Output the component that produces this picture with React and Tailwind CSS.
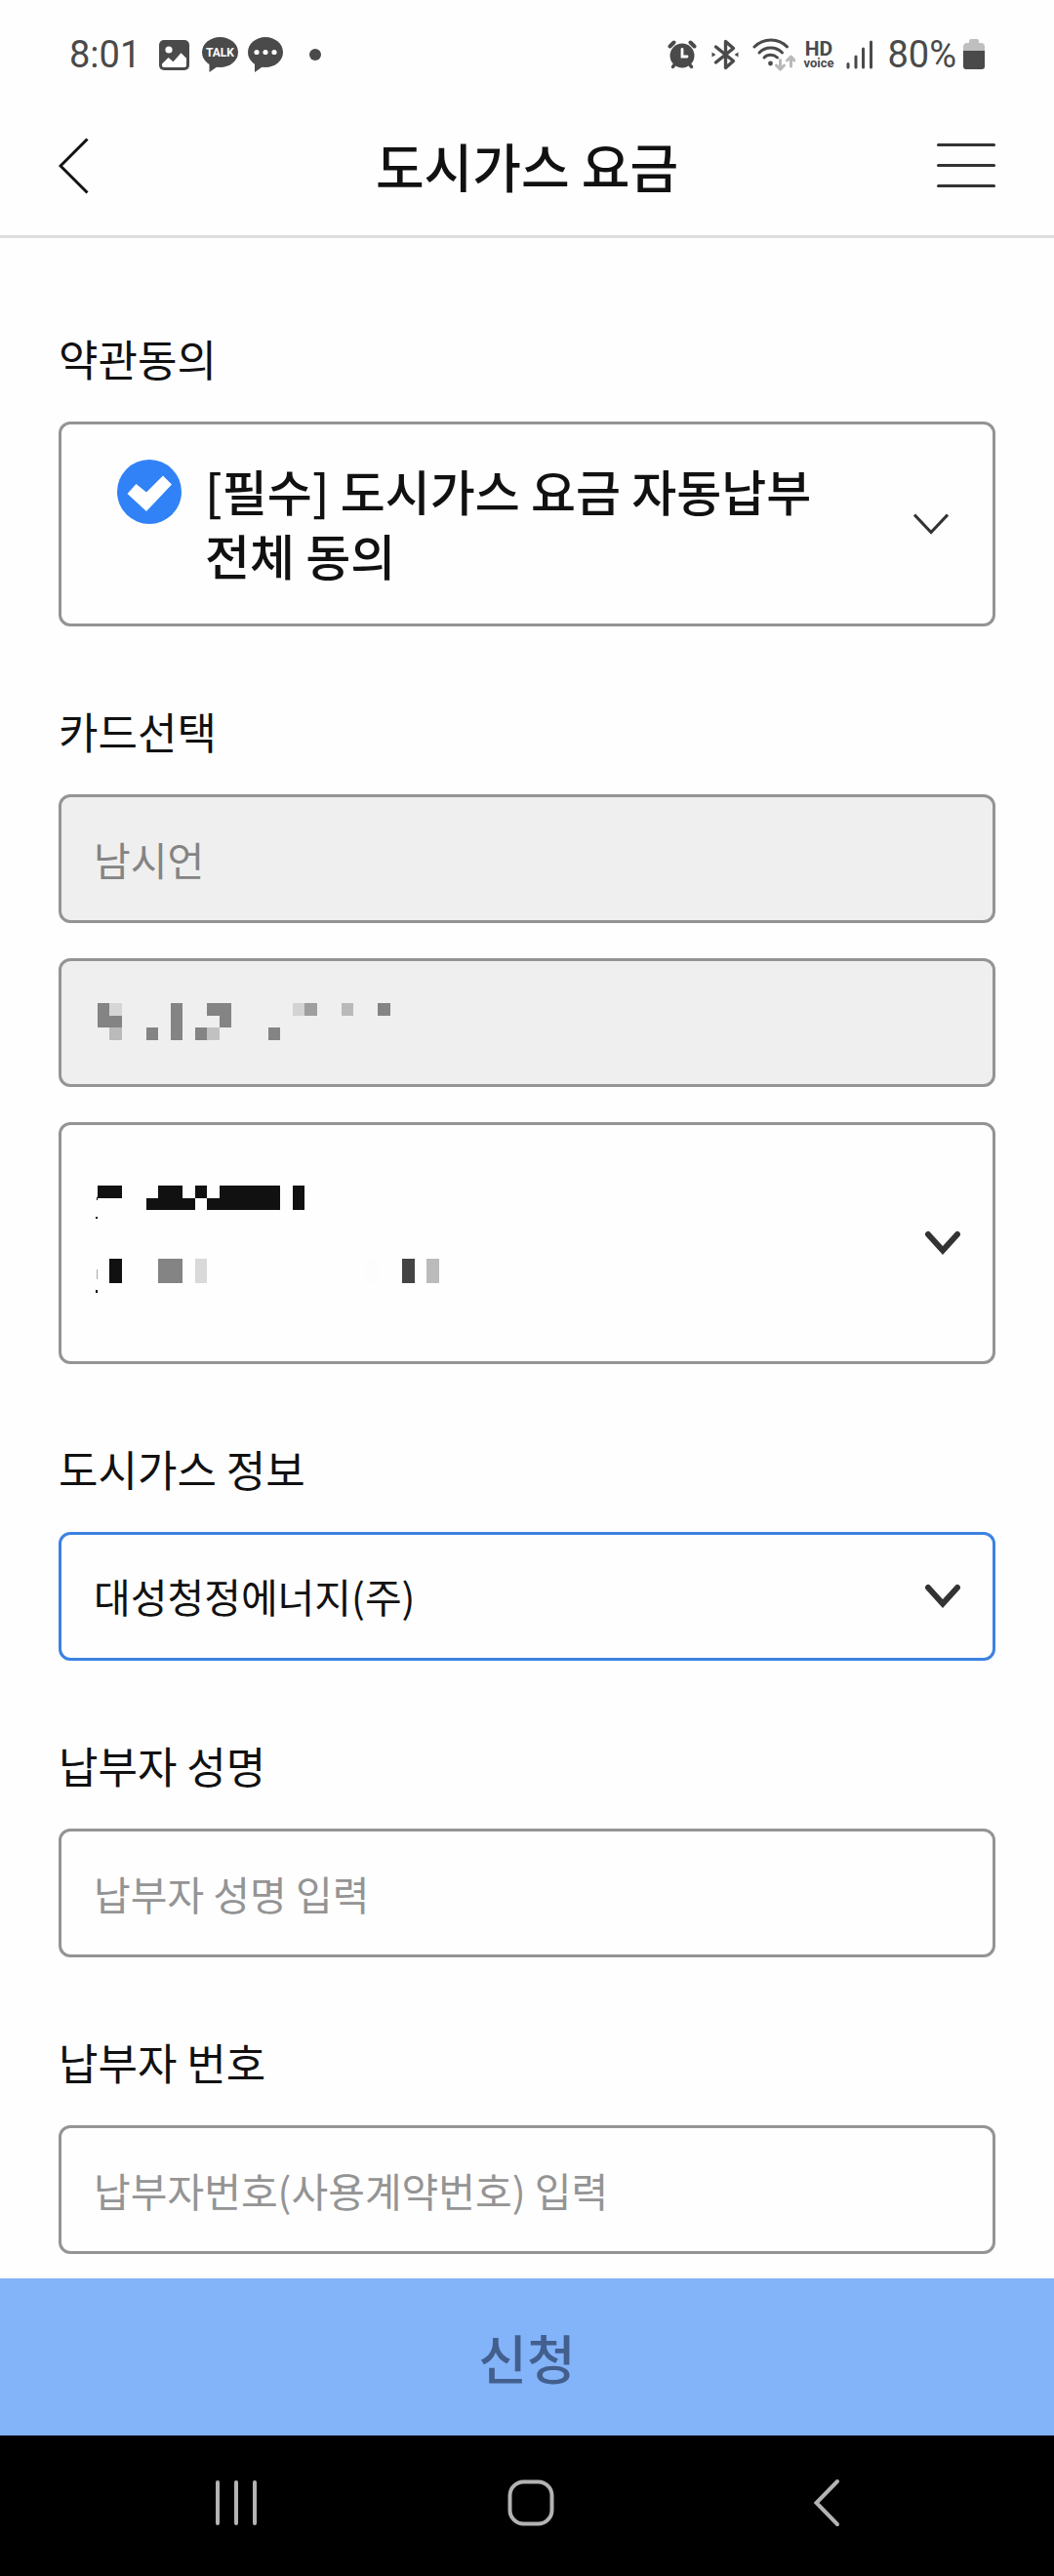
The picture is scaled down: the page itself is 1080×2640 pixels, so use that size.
import React, { useState } from 'react'

const CELL = 12.5

// [column, row, columns, rows, colour]
const accountMask = [
  [0, 0, 1, 1, '#848484'],
  [1, 0, 1, 1, '#d6d6d6'],
  [0, 1, 2, 1, '#848484'],
  [1, 2, 1, 1, '#bababa'],
  [4, 2, 1, 1, '#848484'],
  [6, 0, 1, 3, '#848484'],
  [8, 2, 1, 1, '#848484'],
  [9, 2, 1, 1, '#c1c1c1'],
  [9, 0, 2, 1, '#848484'],
  [10, 1, 1, 1, '#848484'],
  [14, 2, 1, 1, '#848484'],
  [16, 0, 1, 1, '#d3d3d3'],
  [17, 0, 1, 1, '#9f9f9f'],
  [20, 0, 1, 1, '#b9b9b9'],
  [23, 0, 1, 1, '#848484'],
]

const cardMask = [
  [0, 0, 2, 1, '#111111'],
  [5, 0, 2, 1, '#111111'],
  [8, 0, 1, 1, '#111111'],
  [10, 0, 5, 1, '#111111'],
  [4, 1, 4, 1, '#111111'],
  [9, 1, 6, 1, '#111111'],
  [16, 0, 1, 2, '#111111'],
  [1, 6, 1, 2, '#111111'],
  [5, 6, 2, 2, '#848484'],
  [8, 6, 1, 2, '#d9d9d9'],
  [22, 6, 1, 2, '#fdfdfd'],
  [25, 6, 1, 2, '#444444'],
  [27, 6, 1, 2, '#bbbbbb'],
]

const Mosaic = ({ cells, height, className, children }) => (
  <svg
    width="360"
    height={height}
    viewBox={`-4 0 360 ${height}`}
    className={className}
    shapeRendering="crispEdges"
    aria-hidden="true"
  >
    {cells.map(([col, row, cols, rows, fill]) => {
      const x = Math.floor(col * CELL)
      const y = Math.round(row * CELL)
      return (
        <rect
          key={`${col}-${row}`}
          x={x}
          y={y}
          width={Math.floor((col + cols) * CELL) - x}
          height={Math.round((row + rows) * CELL) - y}
          fill={fill}
        />
      )
    })}
    {children}
  </svg>
)

const StatusBar = () => (
  <div className="flex h-[98px] items-center justify-between pt-[14px] pr-[71px] pl-[71px] font-['Roboto',sans-serif] text-[38px] leading-none text-[#4a4a4a]">
    <div className="flex items-center">
      <span>8:01</span>
      <svg width="31" height="31" viewBox="0 0 31 31" className="ml-[19px]" aria-hidden="true">
        <rect width="31" height="31" rx="5" fill="#4a4a4a" />
        <circle cx="10" cy="10" r="3.6" fill="#fff" />
        <path d="M3 24.5 9.5 18l5 4.200 8-9 5.500 5.500V26a2 2 0 0 1-2 2H5a2 2 0 0 1-2-2Z" fill="#fff" />
      </svg>
      <svg width="37" height="36" viewBox="0 0 37 36" className="ml-[13px]" aria-hidden="true">
        <ellipse cx="18.5" cy="15.500" rx="18.500" ry="15.500" fill="#4a4a4a" />
        <path d="M7.500 25v11l10-7Z" fill="#4a4a4a" />
        <text x="18.5" y="20" textAnchor="middle" fontSize="12" fontWeight="700" fill="#fff">
          TALK
        </text>
      </svg>
      <svg width="36" height="36" viewBox="0 0 36 36" className="ml-[10px]" aria-hidden="true">
        <ellipse cx="18" cy="15.500" rx="18" ry="15.500" fill="#4a4a4a" />
        <path d="M7 25v11l10-7Z" fill="#4a4a4a" />
        <circle cx="9" cy="15.500" r="2.600" fill="#fff" />
        <circle cx="18" cy="15.500" r="2.600" fill="#fff" />
        <circle cx="27" cy="15.500" r="2.600" fill="#fff" />
      </svg>
      <span className="ml-[27px] h-3 w-3 rounded-full bg-[#4a4a4a]" />
    </div>

    <div className="flex items-center">
      <svg width="30" height="30" viewBox="0 0 30 30" fill="none" stroke="#4a4a4a" strokeLinecap="round" aria-hidden="true">
        <circle cx="15" cy="16" r="12.500" fill="#4a4a4a" stroke="none" />
        <path d="m2.500 6.500 4-4M27.500 6.500l-4-4" strokeWidth="4" />
        <path d="m5.500 27.500 3-4M24.500 27.500l-3-4" strokeWidth="3.500" />
        <path d="M15 9.500v7.500h5" stroke="#fff" strokeWidth="2.800" />
      </svg>
      <svg width="28" height="32" viewBox="0 0 28 32" className="ml-[15px]" fill="none" stroke="#4a4a4a" strokeWidth="3.400" strokeLinejoin="round" strokeLinecap="round" aria-hidden="true">
        <path d="M4.500 8 22.500 22.500 14.500 29.500V2.500L22.500 9.500 4.500 24" />
        <path d="M.5 13.500v5l4-2.500ZM27.500 13.500v5l-4-2.500Z" fill="#4a4a4a" stroke="none" />
      </svg>
      <svg width="44" height="34" viewBox="0 0 44 34" className="ml-[14px]" fill="none" strokeLinecap="round" aria-hidden="true">
        <g stroke="#4a4a4a" strokeWidth="3">
          <path d="M2 9C11-.5 27-.5 35.500 9" />
          <path d="M7 15C13.500 8.300 24 8.300 30.500 15" />
          <path d="M12 20C15.500 16.300 21.500 16.300 25.500 20" />
        </g>
        <circle cx="18.500" cy="26" r="2.400" fill="#4a4a4a" />
        <g stroke="#b9b9b9" strokeWidth="3" strokeLinejoin="round">
          <path d="M28.500 22.500v9.500M24.500 28l4 4.200 4-4.200" />
          <path d="M39.500 29v-9.500M35.500 23l4-4 3.500 4" />
        </g>
      </svg>
      <span className="ml-2 flex flex-col items-center font-bold">
        <span className="text-[21px] leading-[18px]">HD</span>
        <span className="text-[13px] leading-[12px]">voice</span>
      </span>
      <svg width="28" height="30" viewBox="0 0 28 30" className="ml-[13px]" stroke="#4a4a4a" strokeWidth="3" strokeLinecap="round" aria-hidden="true">
        <path d="M2 24.500v3.500M10 17v11M17.500 9v19M25.500 2v26" />
      </svg>
      <span className="ml-[14px]">80%</span>
      <svg width="22" height="32" viewBox="0 0 22 32" className="ml-[7px]" aria-hidden="true">
        <path d="M6 4V2a2 2 0 0 1 2-2h6a2 2 0 0 1 2 2v2h2a4 4 0 0 1 4 4v4H0V8a4 4 0 0 1 4-4Z" fill="#bfbfbf" />
        <path d="M0 12h22v16a3 3 0 0 1-3 3H3a3 3 0 0 1-3-3Z" fill="#4a4a4a" />
      </svg>
    </div>
  </div>
)

const Header = () => (
  <header className="flex h-[146px] items-center justify-between border-b-[3px] border-[#dddddd] px-[60px]">
    <button type="button" aria-label="뒤로" className="flex w-[60px]">
      <svg width="32" height="58" viewBox="0 0 32 58" fill="none" stroke="#111" strokeWidth="3">
        <path d="M29.500 1.500 2 29l27.500 27.500" />
      </svg>
    </button>
    <h1 className="text-[54px] leading-[66px] font-medium">도시가스 요금</h1>
    <button type="button" aria-label="메뉴" className="flex w-[60px] flex-col gap-[18px]">
      <span className="h-[3px] rounded-full bg-[#333333]" />
      <span className="h-[3px] rounded-full bg-[#333333]" />
      <span className="h-[3px] rounded-full bg-[#333333]" />
    </button>
  </header>
)

const SelectArrow = () => (
  <svg
    width="36"
    height="26"
    viewBox="0 0 36 26"
    className="pointer-events-none absolute top-1/2 right-9 -translate-y-1/2"
    fill="none"
    stroke="#333"
    strokeWidth="6"
    strokeLinecap="round"
    aria-hidden="true"
  >
    <path d="m3 4 15 16.500L33 4" />
  </svg>
)

const Field = ({ id, label, children }) => (
  <section className="flex flex-col">
    <label htmlFor={id} className="mb-[34px] text-[44px] leading-[62px]">
      {label}
    </label>
    <div className="flex flex-col gap-9">{children}</div>
  </section>
)

const App = () => {
  const [agreed, setAgreed] = useState(true)
  const [payerName, setPayerName] = useState('')
  const [payerNumber, setPayerNumber] = useState('')

  return (
    <div className="flex min-h-screen flex-col bg-[#fefefe] font-['Noto_Sans_CJK_KR',sans-serif] text-[#111111]">
      <StatusBar />
      <Header />

      <main className="flex flex-1 flex-col gap-[76px] px-[60px] pt-[92px] pb-6">
        <Field id="agree" label="약관동의">
          <div className="flex items-center gap-6 rounded-xl border-[3px] border-[#949494] pr-[45px] pl-[57px]">
            <label className="flex flex-1 items-start gap-6 pt-[34px] pb-[38px] text-[50px] leading-[66px] font-medium break-keep">
              <input
                id="agree"
                type="checkbox"
                className="peer sr-only"
                checked={agreed}
                onChange={(event) => setAgreed(event.target.checked)}
              />
              <svg width="66" height="66" viewBox="0 0 66 66" className="mt-0.5 shrink-0 text-gray-300 peer-checked:text-[#3182f6]" aria-hidden="true">
                <circle cx="33" cy="33" r="33" fill="currentColor" />
                <path d="m10.500 35 9-10L30 33.500 47 16.500l9 9L30 53Z" fill="#fff" />
              </svg>
              <span>[필수] 도시가스 요금 자동납부 전체 동의</span>
            </label>
            <button type="button" aria-label="약관 펼치기" className="shrink-0">
              <svg width="36" height="22" viewBox="0 0 36 22" fill="none" stroke="#333" strokeWidth="3">
                <path d="m1 1.500 17 18 17-18" />
              </svg>
            </button>
          </div>
        </Field>

        <Field id="holder" label="카드선택">
          <input
            id="holder"
            type="text"
            value="남시언"
            disabled
            className="h-[132px] w-full rounded-xl border-[3px] border-[#949494] bg-[#efefef] px-[33px] text-[41px] text-[#848484]"
          />
          <div className="relative">
            <input
              type="text"
              aria-label="카드 정보"
              disabled
              className="block h-[132px] w-full rounded-xl border-[3px] border-[#949494] bg-[#efefef] px-[33px]"
            />
            <Mosaic cells={accountMask} height={38} className="absolute top-[46px] left-9" />
          </div>
          <div className="relative">
            <button
              type="button"
              aria-label="카드"
              className="flex h-[248px] w-full rounded-xl border-[3px] border-[#949494] px-[33px] pt-[62px]"
            >
              <Mosaic cells={cardMask} height={112}>
                <path d="M-1 12h1v3h-1ZM-2 32h2v2h-2ZM-2 107h2v3h-2Z" fill="#111" />
                <path d="M-1 86h1v10h-1Z" fill="#aaa" />
              </Mosaic>
            </button>
            <SelectArrow />
          </div>
        </Field>

        <Field id="company" label="도시가스 정보">
          <div className="relative">
            <select
              id="company"
              className="block h-[132px] w-full appearance-none rounded-xl border-[3px] border-[#3c82e2] px-[33px] text-[41px]"
            >
              <option>대성청정에너지(주)</option>
            </select>
            <SelectArrow />
          </div>
        </Field>

        <Field id="payer-name" label="납부자 성명">
          <input
            id="payer-name"
            type="text"
            value={payerName}
            onChange={(event) => setPayerName(event.target.value)}
            placeholder="납부자 성명 입력"
            className="h-[132px] w-full rounded-xl border-[3px] border-[#949494] px-[33px] text-[41px] placeholder:text-[#949494]"
          />
        </Field>

        <Field id="payer-number" label="납부자 번호">
          <input
            id="payer-number"
            type="text"
            value={payerNumber}
            onChange={(event) => setPayerNumber(event.target.value)}
            placeholder="납부자번호(사용계약번호) 입력"
            className="h-[132px] w-full rounded-xl border-[3px] border-[#949494] px-[33px] text-[41px] placeholder:text-[#949494]"
          />
        </Field>
      </main>

      <button
        type="button"
        disabled={!payerName || !payerNumber}
        className="h-[161px] w-full bg-[#3182f6] text-[54px] font-medium text-white disabled:bg-[#83b3f9] disabled:text-[#425f8d]"
      >
        신청
      </button>

      <nav className="grid h-36 grid-cols-3 items-center justify-items-center bg-black pr-[82px] pb-[6px] pl-[91px]">
        <button type="button" aria-label="최근 앱">
          <svg width="44" height="48" viewBox="0 0 44 48" stroke="#b3b3b3" strokeWidth="4" strokeLinecap="round">
            <path d="M3 3v42M22 3v42M41 3v42" />
          </svg>
        </button>
        <button type="button" aria-label="홈">
          <svg width="48" height="48" viewBox="0 0 48 48" fill="none" stroke="#b3b3b3" strokeWidth="4">
            <rect x="2.500" y="2.500" width="43" height="43" rx="14" />
          </svg>
        </button>
        <button type="button" aria-label="이전">
          <svg width="28" height="50" viewBox="0 0 28 50" fill="none" stroke="#b3b3b3" strokeWidth="4" strokeLinecap="round">
            <path d="M25 3 3.500 25 25 47" />
          </svg>
        </button>
      </nav>
    </div>
  )
}

export default App
